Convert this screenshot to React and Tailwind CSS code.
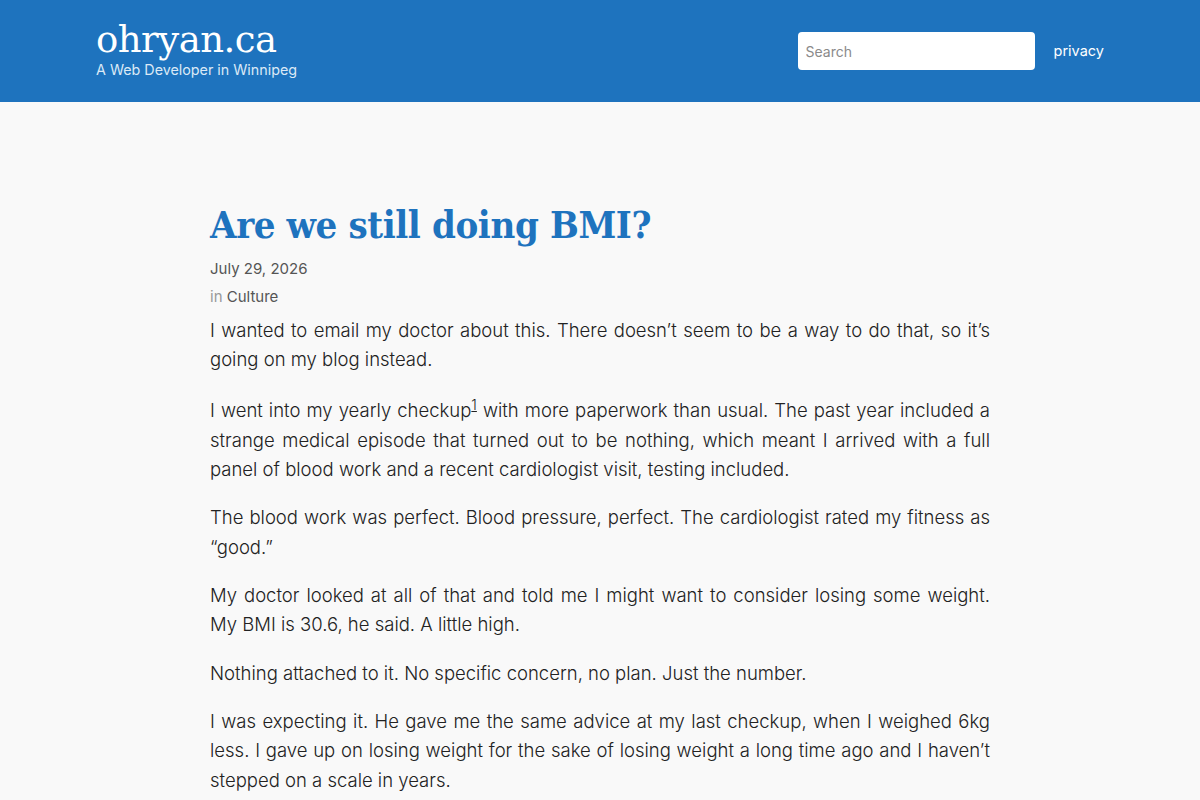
export default function App() {
  const body = "font-['Inter',sans-serif]";
  return (
    <div className={`min-h-screen bg-[#f9f9f9] ${body}`}>
      <header className="bg-[#1e73be] h-[102px]">
        <div className="w-[1008px] mx-auto flex items-center justify-between h-full">
          <div className="flex flex-col mt-[-2px]">
            <a className="font-['DejaVu_Serif',serif] text-white text-[37px] leading-[40px] tracking-[-0.5px]">ohryan.ca</a>
            <span className="text-[#dbe9f6] text-[14.3px] leading-[20px]">A Web Developer in Winnipeg</span>
          </div>
          <div className="flex items-center gap-[19px]">
            <input
              placeholder="Search"
              className="w-[237px] h-[38px] rounded-[4px] bg-white px-[8px] text-[14px] placeholder-[#8a8a8a] outline-none"
            />
            <a className="text-white text-[14.5px]">privacy</a>
          </div>
        </div>
      </header>
      <main className="w-[780px] mx-auto pt-[98px]">
        <h1 className="font-['DejaVu_Serif_Condensed','DejaVu_Serif',serif] font-bold text-[#1e73be] text-[38px] leading-[50px] tracking-[-0.4px]">
          Are we still doing BMI?
        </h1>
        <div className="mt-[9px] text-[15px] text-[#555] leading-[20px]">July 29, 2026</div>
        <div className="mt-[8px] text-[15px] leading-[20px] text-[#555]">
          <span className="text-[#999]">in</span> Culture
        </div>
        <div className="mt-[9px] text-[18.5px] leading-[29.2px] font-light text-[#222] text-justify space-y-[19.3px]">
          <p>I wanted to email my doctor about this. There doesn’t seem to be a way to do that, so it’s going on my blog instead.</p>
          <p className="!mt-[22px]">
            I went into my yearly checkup<sup className="text-[14px] underline">1</sup> with more paperwork than usual. The past year included a strange medical episode that turned out to be nothing, which meant I arrived with a full panel of blood work and a recent cardiologist visit, testing included.
          </p>
          <p>The blood work was perfect. Blood pressure, perfect. The cardiologist rated my fitness as “good.”</p>
          <p>My doctor looked at all of that and told me I might want to consider losing some weight. My BMI is 30.6, he said. A little high.</p>
          <p>Nothing attached to it. No specific concern, no plan. Just the number.</p>
          <p>I was expecting it. He gave me the same advice at my last checkup, when I weighed 6kg less. I gave up on losing weight for the sake of losing weight a long time ago and I haven’t stepped on a scale in years.</p>
        </div>
      </main>
    </div>
  );
}
